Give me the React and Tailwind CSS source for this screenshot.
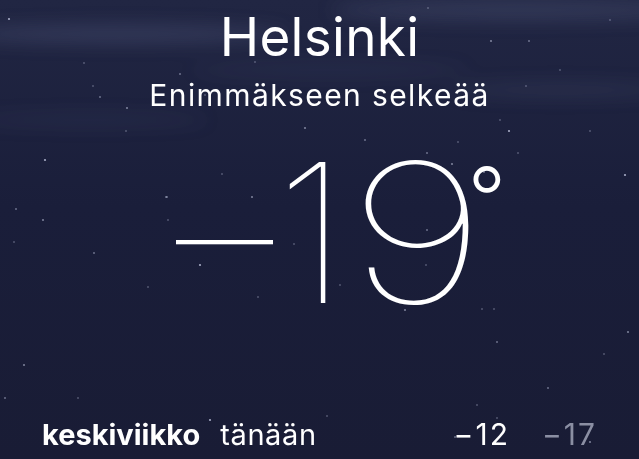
import React from 'react'

const stars = [
  [9, 19], [84, 63], [93, 86], [100, 97], [127, 108], [126, 131], [166, 197],
  [428, 8], [491, 41], [529, 41], [526, 86], [500, 120], [509, 131], [458, 142], [590, 131],
  [16, 209], [43, 220], [14, 242], [94, 253], [148, 287], [24, 365], [5, 398], [78, 398],
  [518, 153], [625, 175], [482, 309], [494, 309], [497, 342], [628, 332], [604, 354], [548, 388],
  [222, 174], [252, 197], [167, 197], [168, 220], [294, 244], [200, 265], [258, 297], [340, 285],
  [427, 153], [452, 164], [467, 220], [427, 230], [426, 265], [405, 310], [484, 172],
  [477, 405], [497, 418], [210, 420], [235, 430], [327, 416], [455, 437], [590, 442],
  [255, 62], [180, 74], [205, 95], [305, 128], [365, 140], [560, 70], [610, 20], [45, 160],
]

function Sky() {
  return (
    <svg className="absolute inset-0 h-full w-full" viewBox="0 0 639 459" preserveAspectRatio="none">
      <defs>
        <linearGradient id="sky" x1="0" y1="0" x2="0" y2="1">
          <stop offset="0" stopColor="#212643" />
          <stop offset="0.45" stopColor="#1a1e3a" />
          <stop offset="1" stopColor="#191c35" />
        </linearGradient>
        <filter id="haze" x="-20%" y="-50%" width="140%" height="200%">
          <feGaussianBlur stdDeviation="9" />
        </filter>
      </defs>
      <rect width="639" height="459" fill="url(#sky)" />
      <g filter="url(#haze)" fill="#8690b8">
        <ellipse cx="120" cy="34" rx="170" ry="9" opacity="0.2" />
        <ellipse cx="520" cy="10" rx="190" ry="10" opacity="0.18" />
        <ellipse cx="560" cy="90" rx="110" ry="7" opacity="0.12" />
        <ellipse cx="90" cy="120" rx="120" ry="6" opacity="0.09" />
        <ellipse cx="330" cy="70" rx="140" ry="6" opacity="0.09" />
      </g>
      {stars.map(([x, y], i) => (
        <circle key={i} cx={x} cy={y} r={i % 4 === 0 ? 1.1 : 0.8} fill="#c8cde6" opacity={i % 3 === 0 ? 0.8 : 0.55} />
      ))}
    </svg>
  )
}

export default function App() {
  return (
    <div className="relative h-[459px] w-[639px] overflow-hidden bg-[#1a1d38] text-white" style={{ fontFamily: 'Inter, "Noto Sans", sans-serif' }}>
      <Sky />
      <div className="relative flex h-full flex-col items-center">
        <h1 className="mt-[5px] text-[53px] leading-[64px] tracking-[0.3px]">Helsinki</h1>
        <p className="mt-[8px] text-[30px] leading-[36px] tracking-[1.4px]">Enimmäkseen selkeää</p>
        {/* current temperature, thin numerals */}
        <div className="mt-[23px] flex items-start self-stretch pl-[176px] text-[194px] font-thin leading-none">
          <span>–</span>
          <span className="ml-[3px]">1</span>
          <span className="ml-[1px] inline-block origin-left scale-x-[1.26]">9</span>
          <span className="ml-[10px] mt-[20px] text-[84px] font-light leading-none">°</span>
        </div>
        <div className="mt-auto mb-[4px] flex w-full items-baseline px-[42px] text-[29px] leading-[40px]">
          <span className="font-bold">keskiviikko</span>
          <span className="ml-[20px] tracking-[0.6px]">tänään</span>
          <span className="ml-auto text-[30px] tracking-[2px]">−12</span>
          <span className="ml-[32px] text-[30px] tracking-[2px] text-[#8b8fa3]">−17</span>
        </div>
      </div>
    </div>
  )
}
